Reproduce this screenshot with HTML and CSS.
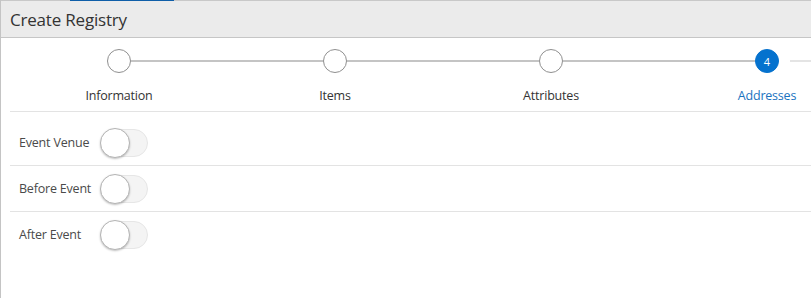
FILE: index.html
```html
<!DOCTYPE html>
<html lang="en">

<head>
  <meta charset="UTF-8" />
  <meta name="viewport" content="width=device-width, initial-scale=1.0" />
  <title>Create Registry</title>
  <link rel="stylesheet" href="styles.css">
</head>

<body>
  <div class="panel">
    <!-- top edge with active tab marker -->
    <div class="topline">
      <span class="seg seg-start"></span>
      <span class="seg seg-active"></span>
      <span class="seg seg-rest"></span>
    </div>

    <div class="header">
      <h1>Create Registry</h1>
    </div>

    <!-- Train / stepper -->
    <div class="train">
      <div class="steps">
        <div class="step">
          <div class="track">
            <span class="line hidden"></span>
            <span class="dot"></span>
            <span class="line"></span>
          </div>
          <span class="label">Information</span>
        </div>
        <div class="step">
          <div class="track">
            <span class="line"></span>
            <span class="dot"></span>
            <span class="line"></span>
          </div>
          <span class="label">Items</span>
        </div>
        <div class="step">
          <div class="track">
            <span class="line"></span>
            <span class="dot"></span>
            <span class="line"></span>
          </div>
          <span class="label">Attributes</span>
        </div>
        <div class="step current">
          <div class="track">
            <span class="line"></span>
            <span class="dot">4</span>
            <span class="line next"></span>
          </div>
          <span class="label">Addresses</span>
        </div>
      </div>
    </div>

    <!-- Address switches -->
    <div class="form">
      <div class="row">
        <span class="row-label">Event Venue</span>
        <span class="switch"><span class="knob"></span></span>
      </div>
      <div class="row">
        <span class="row-label">Before Event</span>
        <span class="switch"><span class="knob"></span></span>
      </div>
      <div class="row last">
        <span class="row-label">After Event</span>
        <span class="switch"><span class="knob"></span></span>
      </div>
    </div>
  </div>
</body>

</html>
```

FILE: styles.css
```css
body {
  margin: 0;
  font-family: "Open Sans", "Noto Sans", sans-serif;
  background-color: #fff;
  color: #333;
  overflow: hidden;
}

.panel {
  height: 298px;
  box-sizing: border-box;
  border-left: 1px solid #c4c4c4;
  overflow: hidden;
}

.topline {
  display: flex;
  height: 1px;
}

.seg {
  display: block;
  height: 1px;
  background: #c8c8c8;
}

.seg-start {
  width: 69px;
}

.seg-active {
  width: 104px;
  background: #0f5ea8;
}

.seg-rest {
  flex: 1;
}

.header {
  height: 36px;
  background: #ebebeb;
  border-bottom: 1px solid #c6c6c6;
  display: flex;
  align-items: center;
  padding-left: 9px;
}

.header h1 {
  margin: 0;
  font-size: 17px;
  font-weight: normal;
  color: #333;
  letter-spacing: -0.2px;
}

.train {
  margin-left: 9px;
  padding-top: 11px;
  padding-bottom: 6px;
  border-bottom: 1px solid #e3e3e3;
  overflow: hidden;
}

.steps {
  display: flex;
  width: 864px;
  margin-left: 1px;
}

.step {
  width: 216px;
  display: flex;
  flex-direction: column;
  align-items: center;
}

.track {
  display: flex;
  align-items: center;
  width: 100%;
}

.line {
  flex: 1;
  height: 2px;
  background: #c4c4c4;
}

.line.hidden {
  visibility: hidden;
}

.line.next {
  background: linear-gradient(to right, transparent 11px, #e4e4e4 11px);
}

.dot {
  width: 24px;
  height: 24px;
  box-sizing: border-box;
  border: 1px solid #8f8f8f;
  border-radius: 50%;
  background: #fff;
  display: flex;
  align-items: center;
  justify-content: center;
  font-size: 11px;
  color: #fff;
}

.label {
  margin-top: 14px;
  font-size: 12.5px;
  line-height: 18px;
  color: #333;
  letter-spacing: -0.2px;
}

.current .dot {
  background: #0572ce;
  border-color: #0572ce;
}

.current .label {
  color: #1a73c0;
}

.form {
  margin-left: 9px;
  padding-top: 8px;
}

.row {
  display: flex;
  align-items: center;
  height: 45px;
  padding-left: 9px;
  border-bottom: 1px solid #e3e3e3;
}

.row.last {
  border-bottom: none;
}

.row-label {
  width: 82px;
  font-size: 12.5px;
  color: #4a4a4a;
  letter-spacing: -0.2px;
}

.switch {
  position: relative;
  width: 47px;
  height: 28px;
  box-sizing: border-box;
  border: 1px solid #e6e6e6;
  border-radius: 14px;
  background: #f4f4f4;
}

.knob {
  position: absolute;
  left: -2px;
  top: -2px;
  width: 30px;
  height: 30px;
  box-sizing: border-box;
  border-radius: 50%;
  background: #fff;
  border: 1px solid #b4b4b4;
  box-shadow: 0 1px 2px rgba(0, 0, 0, 0.25);
}
```
